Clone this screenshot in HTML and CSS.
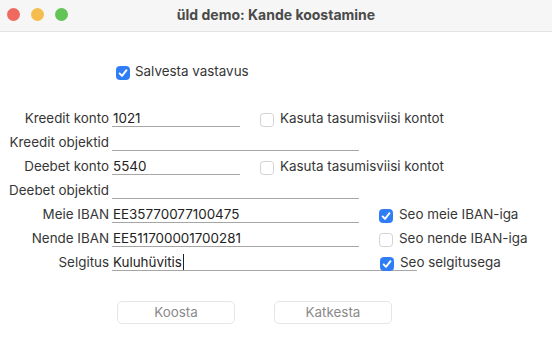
FILE: index.html
```html
<!DOCTYPE html>
<html lang="et">
<head>
<meta charset="utf-8">
<title>üld demo: Kande koostamine</title>
<link rel="stylesheet" href="styles.css">
</head>
<body>
<div class="window">
  <header class="titlebar">
    <div class="lights">
      <span class="light red"></span>
      <span class="light yellow"></span>
      <span class="light green"></span>
    </div>
    <h1 class="title">üld demo: Kande koostamine</h1>
    <div></div>
  </header>
  <main class="content">
    <label class="check top-check"><span class="cb checked"><svg viewBox="0 0 14 14" width="14" height="14"><path d="M3.6 7.4 L6 9.9 L10.5 4.2" fill="none" stroke="#fff" stroke-width="1.9" stroke-linecap="round" stroke-linejoin="round"/></svg></span>Salvesta vastavus</label>

    <div class="form">
      <div class="row">
        <span class="label">Kreedit konto</span>
        <span class="field short">1021</span>
        <label class="check row-check"><span class="cb"></span>Kasuta tasumisviisi kontot</label>
      </div>
      <div class="row">
        <span class="label">Kreedit objektid</span>
        <span class="field long"></span>
      </div>
      <div class="row">
        <span class="label">Deebet konto</span>
        <span class="field short">5540</span>
        <label class="check row-check"><span class="cb"></span>Kasuta tasumisviisi kontot</label>
      </div>
      <div class="row">
        <span class="label">Deebet objektid</span>
        <span class="field long"></span>
      </div>
      <div class="row">
        <span class="label">Meie IBAN</span>
        <span class="field long">EE35770077100475</span>
        <label class="check row-check"><span class="cb checked"><svg viewBox="0 0 14 14" width="14" height="14"><path d="M3.6 7.4 L6 9.9 L10.5 4.2" fill="none" stroke="#fff" stroke-width="1.9" stroke-linecap="round" stroke-linejoin="round"/></svg></span>Seo meie IBAN-iga</label>
      </div>
      <div class="row">
        <span class="label">Nende IBAN</span>
        <span class="field long">EE511700001700281</span>
        <label class="check row-check"><span class="cb"></span>Seo nende IBAN-iga</label>
      </div>
      <div class="row">
        <span class="label">Selgitus</span>
        <span class="field wide">Kuluhüvitis<span class="caret"></span></span>
        <label class="check row-check overlap"><span class="cb checked"><svg viewBox="0 0 14 14" width="14" height="14"><path d="M3.6 7.4 L6 9.9 L10.5 4.2" fill="none" stroke="#fff" stroke-width="1.9" stroke-linecap="round" stroke-linejoin="round"/></svg></span>Seo selgitusega</label>
      </div>
    </div>

    <div class="buttons">
      <button class="btn" type="button">Koosta</button>
      <button class="btn" type="button">Katkesta</button>
    </div>
  </main>
</div>
</body>
</html>
```

FILE: styles.css
```css
* { box-sizing: border-box; }

html, body {
  margin: 0;
  padding: 0;
  background: #ffffff;
}

body {
  font-family: Inter, "Noto Sans", "Liberation Sans", sans-serif;
  font-size: 13.4px;
  color: #363636;
  width: 552px;
  height: 346px;
  overflow: hidden;
}

.window {
  width: 552px;
  height: 346px;
  background: #ffffff;
}

.titlebar {
  height: 32px;
  background: #f6f6f6;
  border-bottom: 1px solid #e3e3e3;
  display: grid;
  grid-template-columns: 1fr auto 1fr;
  align-items: center;
}

.lights {
  display: flex;
  gap: 11px;
  padding-left: 7px;
  margin-top: -3px;
}

.light {
  width: 13px;
  height: 13px;
  border-radius: 50%;
  display: block;
}
.red { background: #ee6a5f; }
.yellow { background: #f5bd4f; }
.green { background: #61c454; }

.title {
  margin: 0;
  margin-top: -3px;
  font-size: 14px;
  font-weight: 700;
  color: #4a4a4a;
  letter-spacing: 0;
}

.content {
  padding-top: 31px;
}

.check {
  display: flex;
  align-items: baseline;
  white-space: nowrap;
  color: #363636;
}

.cb {
  display: inline-block;
  flex: none;
  width: 14px;
  height: 14px;
  border: 1px solid #d2d2d2;
  border-radius: 3.5px;
  background: #ffffff;
  margin-right: 6px;
  align-self: flex-end;
  position: relative;
}

.cb.checked {
  background: #2f7df6;
  border-color: #2f7df6;
}

.cb svg {
  position: absolute;
  left: -1px;
  top: -1px;
}

.top-check {
  margin-left: 116px;
  height: 16px;
  line-height: 16px;
}
.top-check .cb {
  margin-bottom: -1px;
  margin-right: 5px;
}

.form {
  margin-top: 24px;
  display: flex;
  flex-direction: column;
}

.row {
  display: flex;
  height: 24px;
}

.label {
  width: 109px;
  text-align: right;
  padding-top: 7px;
  line-height: 16px;
  margin-right: 3px;
  white-space: nowrap;
  color: #363636;
}

.field {
  height: 24px;
  padding-top: 7px;
  line-height: 16px;
  border-bottom: 1px solid #a6a6a6;
  color: #222222;
  white-space: nowrap;
  padding-left: 1px;
}

.field.short { width: 128px; }
.field.long { width: 247px; }
.field.wide { width: 305px; }

.caret {
  display: inline-block;
  width: 1px;
  height: 16px;
  background: #222222;
  vertical-align: -3px;
  margin-left: 1px;
}

.row-check {
  margin-left: 20px;
  padding-top: 7px;
  line-height: 16px;
  height: 24px;
}
.row-check .cb {
  align-self: flex-end;
  margin-bottom: 0;
}
.row-check.overlap {
  margin-left: -37px;
}

.buttons {
  display: flex;
  gap: 39px;
  margin-top: 30px;
  padding-left: 117px;
}

.btn {
  width: 118px;
  height: 23px;
  border: 1px solid #e6e6e6;
  border-radius: 5px;
  background: #ffffff;
  font-family: inherit;
  font-size: 13.4px;
  color: #8a8a8a;
  padding: 0;
  line-height: 21px;
}
```
